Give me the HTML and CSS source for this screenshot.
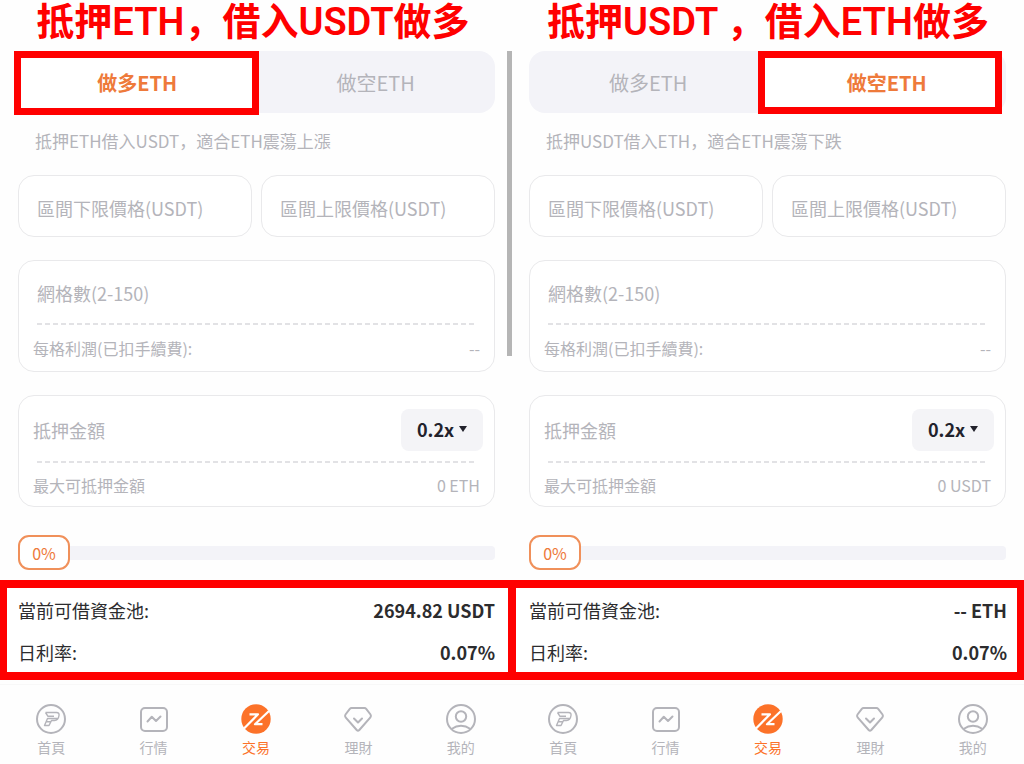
FILE: index.html
```html
<!DOCTYPE html>
<html lang="zh">
<head>
<meta charset="utf-8">
<meta name="viewport" content="width=device-width, initial-scale=1">
<title>抵押借入做多</title>
<link rel="stylesheet" href="styles.css">
</head>
<body>
<svg class="sprite" aria-hidden="true">
  <symbol id="i-home" viewBox="0 0 30 30" fill="none" stroke="currentColor" stroke-linejoin="round">
    <circle cx="15" cy="15" r="14" stroke-width="2"/>
    <path stroke-width="1.400" d="M9.500 8.500H20.500Q23.500 8.500 23 11.500Q22.300 16.500 18.500 16.500H15.500L13 21.500H8.500L11.500 14.500H22M9.500 8.500L12 12.300H18M10.300 17.800H15"/>
  </symbol>
  <symbol id="i-market" viewBox="0 0 30 30" fill="none" stroke="currentColor" stroke-width="2" stroke-linejoin="round" stroke-linecap="round">
    <rect x="2" y="4" width="26" height="23" rx="4"/>
    <path d="M8.500 17.500L12.800 12.800L17 17L21.500 12.500"/>
  </symbol>
  <symbol id="i-trade" viewBox="0 0 30 30">
    <circle cx="15" cy="15" r="14.700" fill="currentColor"/>
    <path fill="none" stroke="#fff" stroke-width="2.200" stroke-linejoin="round" d="M8.500 10.300H17L3 24.500M28 7L14 20.200H21.500"/>
  </symbol>
  <symbol id="i-wealth" viewBox="0 0 30 30" fill="none" stroke="currentColor" stroke-width="2" stroke-linejoin="round" stroke-linecap="round">
    <path d="M8.500 4H21.500Q22.500 4 23.200 4.800L27.500 10.500Q28.500 12 27.400 13.300L16.300 26Q15 27.300 13.700 26L2.600 13.300Q1.500 12 2.500 10.500L6.800 4.800Q7.500 4 8.500 4Z"/>
    <path d="M11 14.500L15 18.500L19 14.500"/>
  </symbol>
  <symbol id="i-me" viewBox="0 0 30 30" fill="none" stroke="currentColor" stroke-width="2">
    <circle cx="15" cy="15" r="14"/>
    <circle cx="15" cy="12.500" r="5.200"/>
    <path d="M5.500 25Q15 18.500 24.500 25"/>
  </symbol>
</svg>

<main class="compare">
  <section class="panel panel--long">
    <h1 class="headline">抵押ETH，借入USDT做多</h1>
    <div class="form">
      <div class="tabs">
        <button class="tab tab--active" type="button">做多ETH</button>
        <button class="tab" type="button">做空ETH</button>
      </div>
      <p class="hint">抵押ETH借入USDT，適合ETH震蕩上漲</p>
      <div class="range">
        <input class="box" type="text" aria-label="區間下限價格" placeholder="區間下限價格(USDT)">
        <input class="box" type="text" aria-label="區間上限價格" placeholder="區間上限價格(USDT)">
      </div>
      <div class="card">
        <div class="card-main card-main--inset"><input class="field" type="text" aria-label="網格數" placeholder="網格數(2-150)"></div>
        <div class="card-row"><span>每格利潤(已扣手續費):</span><span>--</span></div>
      </div>
      <div class="card">
        <div class="card-main">
          <input class="field" type="text" aria-label="抵押金額" placeholder="抵押金額">
          <div class="leverage">
            <select aria-label="槓桿倍數"><option>0.2x</option></select>
            <svg class="caret" viewBox="0 0 8 6" aria-hidden="true"><path d="M0 0H8L4 6Z"/></svg>
          </div>
        </div>
        <div class="card-row"><span>最大可抵押金額</span><span>0 ETH</span></div>
      </div>
      <div class="slider">
        <input id="ratio-long" type="range" min="0" max="100" value="0" aria-label="抵押比例">
        <output class="slider-value" for="ratio-long">0%</output>
      </div>
    </div>
    <dl class="pool">
      <div class="pool-row"><dt>當前可借資金池:</dt><dd>2694.82 USDT</dd></div>
      <div class="pool-row"><dt>日利率:</dt><dd>0.07%</dd></div>
    </dl>
    <nav class="nav">
      <a href="#"><svg><use href="#i-home"/></svg>首頁</a>
      <a href="#"><svg><use href="#i-market"/></svg>行情</a>
      <a href="#" class="current"><svg><use href="#i-trade"/></svg>交易</a>
      <a href="#"><svg><use href="#i-wealth"/></svg>理財</a>
      <a href="#"><svg><use href="#i-me"/></svg>我的</a>
    </nav>
    <div class="scrollbar"></div>
  </section>

  <section class="panel panel--short">
    <h1 class="headline">抵押USDT ，借入ETH做多</h1>
    <div class="form">
      <div class="tabs">
        <button class="tab" type="button">做多ETH</button>
        <button class="tab tab--active" type="button">做空ETH</button>
      </div>
      <p class="hint">抵押USDT借入ETH，適合ETH震蕩下跌</p>
      <div class="range">
        <input class="box" type="text" aria-label="區間下限價格" placeholder="區間下限價格(USDT)">
        <input class="box" type="text" aria-label="區間上限價格" placeholder="區間上限價格(USDT)">
      </div>
      <div class="card">
        <div class="card-main card-main--inset"><input class="field" type="text" aria-label="網格數" placeholder="網格數(2-150)"></div>
        <div class="card-row"><span>每格利潤(已扣手續費):</span><span>--</span></div>
      </div>
      <div class="card">
        <div class="card-main">
          <input class="field" type="text" aria-label="抵押金額" placeholder="抵押金額">
          <div class="leverage">
            <select aria-label="槓桿倍數"><option>0.2x</option></select>
            <svg class="caret" viewBox="0 0 8 6" aria-hidden="true"><path d="M0 0H8L4 6Z"/></svg>
          </div>
        </div>
        <div class="card-row"><span>最大可抵押金額</span><span>0 USDT</span></div>
      </div>
      <div class="slider">
        <input id="ratio-short" type="range" min="0" max="100" value="0" aria-label="抵押比例">
        <output class="slider-value" for="ratio-short">0%</output>
      </div>
    </div>
    <dl class="pool">
      <div class="pool-row"><dt>當前可借資金池:</dt><dd>-- ETH</dd></div>
      <div class="pool-row"><dt>日利率:</dt><dd>0.07%</dd></div>
    </dl>
    <nav class="nav">
      <a href="#"><svg><use href="#i-home"/></svg>首頁</a>
      <a href="#"><svg><use href="#i-market"/></svg>行情</a>
      <a href="#" class="current"><svg><use href="#i-trade"/></svg>交易</a>
      <a href="#"><svg><use href="#i-wealth"/></svg>理財</a>
      <a href="#"><svg><use href="#i-me"/></svg>我的</a>
    </nav>
  </section>
</main>
</body>
</html>
```

FILE: styles.css
```css
:root {
  --red: #ff0000;
  --orange: #ee7a3b;
  --muted: #b4b4ba;
  --line: #e9e9eb;
  --fill: #f3f3f8;
}

* {
  box-sizing: border-box;
}

body {
  margin: 0;
  background: #fefefe;
  color: #2c2c2e;
  font-family: "Noto Sans CJK SC", "Noto Sans CJK TC", sans-serif;
  font-size: 18px;
}

button,
input,
select {
  font: inherit;
  color: inherit;
}

.sprite {
  position: absolute;
  width: 0;
  height: 0;
}

.compare {
  display: grid;
  grid-template-columns: 1fr 1fr;
}

.panel {
  position: relative;
  display: flex;
  flex-direction: column;
  min-width: 0;
}

.headline {
  margin: 0;
  padding-bottom: 7px;
  color: var(--red);
  font-family: Roboto, "Noto Sans CJK SC", sans-serif;
  font-size: 38px;
  font-weight: 600;
  line-height: 44px;
  text-align: center;
  white-space: nowrap;
}

.panel--long .headline {
  padding-right: 6px;
}

.form {
  padding: 0 17px 0 18px;
}

.panel--short .form {
  padding: 0 18px 0 17px;
}

.tabs {
  display: grid;
  grid-template-columns: 1fr 1fr;
  height: 62px;
  border-radius: 16px;
  background: var(--fill);
}

.tab {
  position: relative;
  padding: 0;
  border: 0;
  background: none;
  color: var(--muted);
  font-size: 20px;
}

.tab--active {
  z-index: 1;
  color: var(--orange);
  font-weight: 700;
}

/* highlight frame around the chosen side */
.tab--active::before {
  content: "";
  position: absolute;
  z-index: -1;
  inset: 0 -2px -2px -4px;
  border: 7px solid var(--red);
  background: #fff;
}

.panel--short .tab--active::before {
  inset: 0 4px -1px -10px;
}

.hint {
  margin: 0;
  padding: 16px 17px 22px;
  color: var(--muted);
  font-size: 17px;
  line-height: 24px;
}

.range {
  display: grid;
  grid-template-columns: 1fr 1fr;
  gap: 9px;
}

.box {
  width: 100%;
  height: 62px;
  padding: 4px 18px 0;
  border: 1px solid var(--line);
  border-radius: 16px;
  background: #fff;
}

.card {
  margin-top: 23px;
  padding: 0 14px;
  height: 112px;
  border: 1px solid var(--line);
  border-radius: 16px;
  background: #fff;
}

.card-main {
  display: flex;
  align-items: center;
  justify-content: space-between;
  height: 67px;
  background: repeating-linear-gradient(90deg, #e2e2e5 0 5px, transparent 5px 8px) 4px 100% / calc(100% - 8px) 2px no-repeat;
}

.card-main--inset {
  height: 64px;
}

.card-main--inset .field {
  padding-left: 4px;
}

.card-main--inset + .card-row {
  height: 46px;
}

.field {
  flex: 1;
  min-width: 0;
  padding: 0;
  border: 0;
  background: none;
}

.box::placeholder,
.field::placeholder {
  color: var(--muted);
  opacity: 1;
}

.card-row {
  display: flex;
  align-items: center;
  justify-content: space-between;
  height: 44px;
  color: var(--muted);
  font-size: 16px;
}

.leverage {
  position: relative;
  margin-right: -3px;
}

.leverage select {
  width: 82px;
  height: 42px;
  padding: 0 16px 2px;
  border: 0;
  border-radius: 8px;
  background: #f4f4f7;
  color: #22222c;
  font-weight: 700;
  appearance: none;
}

.caret {
  position: absolute;
  top: 17px;
  right: 16px;
  width: 8px;
  height: 6px;
  fill: #22222c;
  pointer-events: none;
}

.slider {
  position: relative;
  display: flex;
  align-items: center;
  height: 35px;
  margin: 28px 0 10px;
}

.slider input {
  width: 100%;
  height: 14px;
  margin: 0;
  border-radius: 4px;
  background: var(--fill);
  appearance: none;
}

.slider input::-webkit-slider-thumb {
  width: 52px;
  height: 14px;
  appearance: none;
}

.slider-value {
  position: absolute;
  left: 0;
  top: 0;
  width: 52px;
  height: 35px;
  border: 2px solid #f0905a;
  border-radius: 11px;
  background: #fff;
  color: var(--orange);
  font-size: 16px;
  line-height: 32px;
  text-align: center;
  pointer-events: none;
}

.pool {
  display: grid;
  gap: 14px;
  margin: 0;
  padding: 8px 13px 6px 11px;
  border: 8px solid var(--red);
  border-width: 8px 4px 8px 7px;
  background: #fff;
}

.panel--short .pool {
  padding: 8px 10px 6px 13px;
  border-width: 8px 7px 8px 4px;
}

.pool-row {
  display: flex;
  justify-content: space-between;
  line-height: 28px;
}

.pool-row dd {
  margin: 0;
  font-weight: 700;
}

.nav {
  display: grid;
  grid-template-columns: repeat(5, 1fr);
  margin-top: 4px;
  padding: 19px 0 5px;
  border-top: 1px solid #f8f8f8;
}

.nav a {
  display: flex;
  flex-direction: column;
  align-items: center;
  gap: 3px;
  color: var(--muted);
  font-size: 14px;
  line-height: 20px;
  text-decoration: none;
}

.nav svg {
  width: 30px;
  height: 30px;
}

.nav .current {
  color: #fc7229;
}

.scrollbar {
  position: absolute;
  top: 51px;
  right: 0;
  width: 5px;
  height: 305px;
  background: #b5b5b5;
}
```
